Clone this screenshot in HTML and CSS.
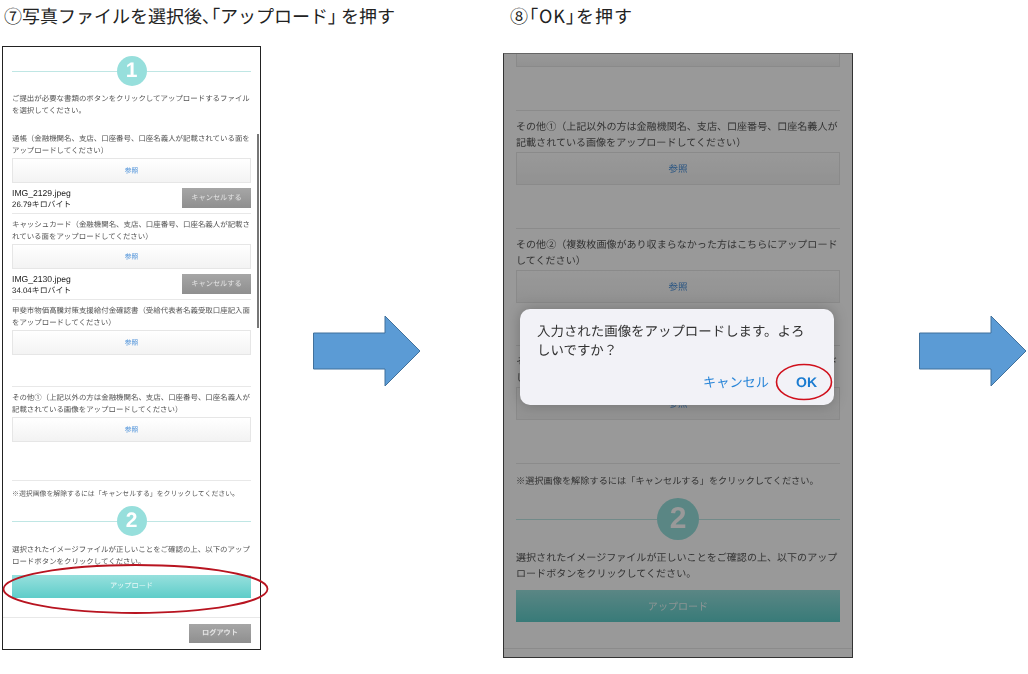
FILE: index.html
```html
<!DOCTYPE html>
<html lang="ja">
<head>
    <meta charset="UTF-8">
    <title>アップロード手順</title>
    <link rel="stylesheet" href="styles.css">
</head>
<body>
    <div class="slide">
        <h2 class="caption caption-7">⑦写真ファイルを選択後<span class="tight">、「</span>アップロード<span class="tight">」</span> を押す</h2>
        <h2 class="caption caption-8">⑧<span class="tight">「</span>OK<span class="tight">」</span>を押す</h2>

        <!-- Step 7 phone -->
        <div class="phone phone-a">
            <div class="step"><span class="step-line"></span><span class="step-num">1</span><span class="step-line"></span></div>
            <p class="text intro">ご提出が必要な書類のボタンをクリックしてアップロードするファイル<br>を選択してください。</p>

            <div class="field field-1">
                <p class="text">通帳（金融機関名、支店、口座番号、口座名義人が記載されている面を<br>アップロードしてください）</p>
                <div class="ref-btn">参照</div>
                <div class="file-row">
                    <div class="file-info">IMG_2129.jpeg<br><span class="file-size">26.79キロバイト</span></div>
                    <div class="gray-btn cancel-btn">キャンセルする</div>
                </div>
            </div>
            <div class="field field-2">
                <p class="text">キャッシュカード（金融機関名、支店、口座番号、口座名義人が記載さ<br>れている面をアップロードしてください）</p>
                <div class="ref-btn">参照</div>
                <div class="file-row">
                    <div class="file-info">IMG_2130.jpeg<br><span class="file-size">34.04キロバイト</span></div>
                    <div class="gray-btn cancel-btn">キャンセルする</div>
                </div>
            </div>
            <div class="field field-3">
                <p class="text">甲斐市物価高騰対策支援給付金確認書（受給代表者名義受取口座記入面<br>をアップロードしてください）</p>
                <div class="ref-btn">参照</div>
            </div>
            <div class="field field-4">
                <p class="text">その他①（上記以外の方は金融機関名、支店、口座番号、口座名義人が<br>記載されている画像をアップロードしてください）</p>
                <div class="ref-btn">参照</div>
            </div>
            <p class="text note">※選択画像を解除するには「キャンセルする」をクリックしてください。</p>

            <div class="step step-2"><span class="step-line"></span><span class="step-num">2</span><span class="step-line"></span></div>
            <p class="text confirm">選択されたイメージファイルが正しいことをご確認の上、以下のアップ<br>ロードボタンをクリックしてください。</p>
            <div class="upload-btn">アップロード</div>
            <div class="footer-row"><div class="gray-btn logout-btn">ログアウト</div></div>
        </div>
        <div class="scrollbar"></div>
        <svg class="mark mark-upload" width="270" height="54" viewBox="0 0 270 54">
            <ellipse cx="135.5" cy="27" rx="132" ry="24" fill="none" stroke="#b81420" stroke-width="1.8"/>
        </svg>

        <svg class="arrow arrow-1" width="110" height="74" viewBox="0 0 110 74">
            <path d="M1.5 19H73V2L108 37 73 72V55H1.5Z" fill="#5b9bd5" stroke="#41719c"/>
        </svg>

        <!-- Step 8 phone -->
        <div class="phone phone-b">
            <div class="ref-btn ref-stub"></div>
            <div class="field field-1">
                <p class="text">その他①（上記以外の方は金融機関名、支店、口座番号、口座名義人が<br>記載されている画像をアップロードしてください）</p>
                <div class="ref-btn">参照</div>
            </div>
            <div class="field field-2">
                <p class="text">その他②（複数枚画像があり収まらなかった方はこちらにアップロード<br>してください）</p>
                <div class="ref-btn">参照</div>
            </div>
            <div class="field field-3">
                <p class="text">その他③（複数枚画像があり収まらなかった方はこちらにアップロード<br>してください）</p>
                <div class="ref-btn">参照</div>
            </div>
            <p class="text note">※選択画像を解除するには「キャンセルする」をクリックしてください。</p>

            <div class="step step-2"><span class="step-line"></span><span class="step-num">2</span><span class="step-line"></span></div>
            <p class="text confirm">選択されたイメージファイルが正しいことをご確認の上、以下のアップ<br>ロードボタンをクリックしてください。</p>
            <div class="upload-btn">アップロード</div>
            <div class="footer-row"></div>

            <div class="dim"></div>
            <div class="dialog">
                <p class="dialog-text">入力された画像をアップロードします。よろ<br>しいですか？</p>
                <div class="dialog-actions">
                    <span class="dialog-cancel">キャンセル</span>
                    <span class="dialog-ok">OK</span>
                </div>
            </div>
        </div>
        <svg class="mark mark-ok" width="60" height="40" viewBox="0 0 60 40">
            <ellipse cx="30" cy="20" rx="27.5" ry="17.5" fill="none" stroke="#d0101c" stroke-width="1.6"/>
        </svg>

        <svg class="arrow arrow-2" width="110" height="74" viewBox="0 0 110 74">
            <path d="M1.5 19H73V2L108 37 73 72V55H1.5Z" fill="#5b9bd5" stroke="#41719c"/>
        </svg>
    </div>
</body>
</html>
```

FILE: styles.css
```css
/* Basic styling */
* {
    box-sizing: border-box;
}
body {
    margin: 0;
    background-color: #fff;
    font-family: "Noto Sans CJK JP", "Liberation Sans", sans-serif;
    color: #555;
    text-rendering: geometricPrecision;
}
.slide {
    position: relative;
    width: 1028px;
    height: 674px;
    overflow: hidden;
}
.caption {
    position: absolute;
    top: 4px;
    margin: 0;
    font-size: 18px;
    line-height: 24px;
    font-weight: 400;
    color: #222;
    white-space: nowrap;
}
.tight {
    font-feature-settings: "palt";
}
.caption-7 {
    left: 4px;
}
.caption-8 {
    left: 510px;
    letter-spacing: 1px;
}
.arrow {
    position: absolute;
    top: 314px;
}
.arrow-1 {
    left: 312px;
}
.arrow-2 {
    left: 918px;
}
.mark {
    position: absolute;
}
.mark-upload {
    left: 0;
    top: 562px;
}
.mark-ok {
    left: 774px;
    top: 362px;
}
.scrollbar {
    position: absolute;
    left: 257px;
    top: 134px;
    width: 2px;
    height: 194px;
    background-color: #777;
}

/* Phone frames */
.phone {
    position: absolute;
    background-color: #fff;
    overflow: hidden;
    filter: blur(0.35px);
}
.phone-a {
    left: 2px;
    top: 46px;
    width: 259px;
    height: 604px;
    padding: 9px 9px 0;
    border: 1px solid #222;
    font-size: 7.45px;
    line-height: 12px;
}
.phone-b {
    left: 503px;
    top: 53px;
    width: 350px;
    height: 605px;
    padding: 0 12px;
    border: 1px solid #333;
    border-top-color: #666;
    font-size: 10.05px;
    line-height: 16px;
}
.text {
    margin: 0;
    white-space: nowrap;
}

/* Numbered step heading */
.step {
    display: flex;
    align-items: center;
}
.step-line {
    flex: 1;
    height: 1px;
    background-color: #bfe6e4;
}
.step-num {
    width: 30px;
    height: 30px;
    border-radius: 50%;
    background-color: #97dfdc;
    color: #fff;
    font-family: "Liberation Sans", sans-serif;
    font-size: 21px;
    line-height: 30px;
    font-weight: 700;
    text-align: center;
}
.phone-b .step-num {
    width: 42px;
    height: 42px;
    font-size: 30px;
    line-height: 42px;
}

/* Upload fields */
.field {
    border-bottom: 1px solid #e8e8e8;
}
.ref-btn {
    background: linear-gradient(#fff, #f3f3f3);
    border: 1px solid #e6e6e6;
    color: #4a90d9;
    text-align: center;
    font-size: 6.8px;
}
.phone-a .ref-btn {
    height: 25px;
    margin-top: 1px;
    line-height: 23px;
}
.phone-b .ref-btn {
    height: 33px;
    margin-top: 2px;
    line-height: 31px;
    font-size: 9.5px;
}
.phone-b .ref-stub {
    height: 13px;
    margin-top: 0;
    border-top: 0;
}
.file-row {
    display: flex;
    justify-content: space-between;
    height: 20px;
    margin-top: 5px;
}
.file-info {
    font-family: "Liberation Sans", "Noto Sans CJK JP", sans-serif;
    font-size: 8.6px;
    line-height: 11px;
    color: #222;
}
.file-size {
    font-size: 7.9px;
}
.gray-btn {
    background: linear-gradient(#a6a6a6, #8f8f8f);
    color: #e4e4e4;
    text-align: center;
    font-size: 7.2px;
}
.cancel-btn {
    width: 69px;
    height: 20px;
    line-height: 20px;
}
.logout-btn {
    width: 62px;
    height: 19px;
    line-height: 19px;
    font-weight: 700;
}

/* Step 7 spacing */
.intro {
    margin-top: 7px;
}
.phone-a .field-1 {
    margin-top: 16px;
    padding-bottom: 5px;
}
.phone-a .field-2 {
    padding-top: 5px;
    padding-bottom: 5px;
}
.phone-a .field-3 {
    padding-top: 5px;
    padding-bottom: 31px;
}
.phone-a .field-4 {
    padding-top: 5px;
    padding-bottom: 38px;
}
.phone-a .note {
    margin-top: 6px;
    font-size: 6.9px;
}
.phone-a .step-2 {
    margin-top: 7px;
}
.phone-a .confirm {
    margin-top: 8px;
}
.upload-btn {
    background: linear-gradient(#97e0dd, #5ecdc9);
    color: #e8f8f7;
    text-align: center;
}
.phone-a .upload-btn {
    height: 23px;
    margin-top: 7px;
    font-size: 7.2px;
    line-height: 23px;
}
.footer-row {
    display: flex;
    justify-content: flex-end;
    border-top: 1px solid #e8e8e8;
}
.phone-a .footer-row {
    margin: 19px -9px 0;
    padding: 6px 9px 0;
}

/* Step 8 spacing */
.phone-b .field {
    margin-top: 43px;
    padding-top: 7px;
    border-top: 1px solid #e8e8e8;
    border-bottom: 0;
}
.phone-b .field-3 {
    margin-top: 42px;
}
.phone-b .note {
    margin-top: 43px;
    padding-top: 8px;
    border-top: 1px solid #e8e8e8;
    font-size: 9.2px;
}
.phone-b .step-2 {
    margin-top: 10px;
}
.phone-b .confirm {
    margin-top: 9px;
}
.phone-b .upload-btn {
    height: 32px;
    margin-top: 9px;
    line-height: 32px;
}
.phone-b .footer-row {
    margin: 26px -12px 0;
}

/* Dimmed screen and alert */
.dim {
    position: absolute;
    left: 0;
    top: 0;
    right: 0;
    bottom: 0;
    background-color: rgba(0, 0, 0, 0.4);
}
.dialog {
    position: absolute;
    left: 16px;
    top: 255px;
    width: 314px;
    height: 96px;
    padding: 12px 17px 0;
    background-color: #f2f2f7;
    border-radius: 10px;
    box-shadow: 0 0 14px rgba(0, 0, 0, 0.25);
    color: #333;
}
.dialog-text {
    margin: 0;
    font-size: 13.45px;
    line-height: 19px;
    white-space: nowrap;
}
.dialog-actions {
    display: flex;
    justify-content: flex-end;
    align-items: center;
    gap: 27px;
    margin-top: 13px;
    color: #2a86d8;
    font-size: 13.2px;
    line-height: 20px;
}
.dialog-ok {
    color: #1a7bd0;
    font-family: "Liberation Sans", sans-serif;
    font-size: 14px;
    font-weight: 700;
}
```
